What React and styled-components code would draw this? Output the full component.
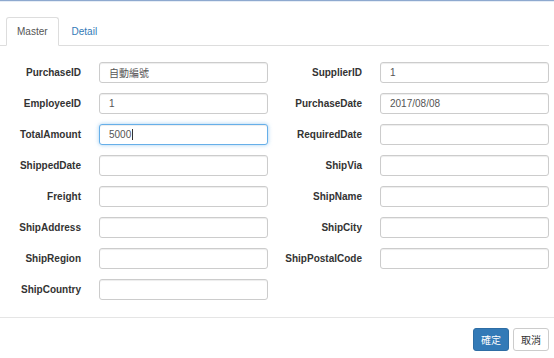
import React from "react";
import styled, { createGlobalStyle, css } from "styled-components";

const Global = createGlobalStyle`
  html, body { margin: 0; padding: 0; background: #fff; }
  body {
    font-family: "Liberation Sans", Arial, "Noto Sans CJK TC", sans-serif;
    font-size: 10px;
    color: #333;
  }
  * { box-sizing: border-box; }
`;

const Page = styled.div`
  width: 554px;
  height: 358px;
  border-top: 1px solid #8ea9cf;
  box-shadow: inset 0 1px 0 #e6edf6;
  display: flex;
  flex-direction: column;
  overflow: hidden;
`;

const TabBar = styled.ul`
  list-style: none;
  margin: 16px 5px 0 0;
  padding: 0 0 0 6px;
  display: flex;
  border-bottom: 1px solid #ddd;
`;

const Tab = styled.li`
  margin: 0 2px -1px 0;
  padding: 7px 10px;
  line-height: 13px;
  font-size: 10px;
  border: 1px solid transparent;
  border-radius: 3px 3px 0 0;
  color: #337ab7;
  ${(p) =>
    p.$active &&
    css`
      color: #555;
      background: #fff;
      border-color: #ddd;
      border-bottom-color: #fff;
    `}
`;

const Form = styled.div`
  display: grid;
  grid-template-columns: 268px 268px;
  column-gap: 13px;
  row-gap: 10px;
  padding: 16px 0 0 0;
`;

const Field = styled.div`
  display: flex;
  align-items: center;
  height: 21px;
`;

const Label = styled.label`
  width: 81px;
  flex: none;
  margin-right: 18px;
  text-align: right;
  font-weight: bold;
  font-size: 10px;
  color: #333;
  white-space: nowrap;
`;

const InputWrap = styled.div`
  position: relative;
  flex: 1;
  height: 21px;
`;

const Input = styled.input`
  display: block;
  width: 100%;
  height: 21px;
  padding: 0 9px;
  font-family: "Liberation Sans", Arial, "Noto Sans CJK TC", sans-serif;
  font-size: 10px;
  color: #555;
  background: #fff;
  border: 1px solid #ccc;
  border-radius: 3px;
  box-shadow: inset 0 1px 1px rgba(0, 0, 0, 0.075);
  outline: none;
  ${(p) =>
    p.$focus &&
    css`
      border-color: #66afe9;
      box-shadow: inset 0 1px 1px rgba(0, 0, 0, 0.075),
        0 0 4px rgba(102, 175, 233, 0.6);
    `}
`;

const Caret = styled.span`
  position: absolute;
  left: 33px;
  top: 5px;
  width: 1px;
  height: 11px;
  background: #333;
`;

const Footer = styled.div`
  margin-top: 17px;
  border-top: 1px solid #e5e5e5;
  padding: 10px 5px 0 0;
  display: flex;
  justify-content: flex-end;
  gap: 4px;
`;

const Button = styled.button`
  height: 23px;
  padding: 0 7px;
  font-family: "Liberation Sans", Arial, "Noto Sans CJK TC", sans-serif;
  font-size: 10px;
  border-radius: 3px;
  border: 1px solid #ccc;
  background: #fff;
  color: #333;
  ${(p) =>
    p.$primary &&
    css`
      background: #337ab7;
      border-color: #2e6da4;
      color: #fff;
    `}
`;

const fields = [
  ["PurchaseID", "自動編號"],
  ["SupplierID", "1"],
  ["EmployeeID", "1"],
  ["PurchaseDate", "2017/08/08"],
  ["TotalAmount", "5000", true],
  ["RequiredDate", ""],
  ["ShippedDate", ""],
  ["ShipVia", ""],
  ["Freight", ""],
  ["ShipName", ""],
  ["ShipAddress", ""],
  ["ShipCity", ""],
  ["ShipRegion", ""],
  ["ShipPostalCode", ""],
  ["ShipCountry", ""],
];

export default function App() {
  return (
    <>
      <Global />
      <Page>
        <TabBar>
          <Tab $active>Master</Tab>
          <Tab>Detail</Tab>
        </TabBar>
        <Form>
          {fields.map(([label, value, focus]) => (
            <Field key={label}>
              <Label>{label}</Label>
              <InputWrap>
                <Input $focus={focus} value={value} readOnly />
                {focus && <Caret />}
              </InputWrap>
            </Field>
          ))}
        </Form>
        <Footer>
          <Button $primary>確定</Button>
          <Button>取消</Button>
        </Footer>
      </Page>
    </>
  );
}
